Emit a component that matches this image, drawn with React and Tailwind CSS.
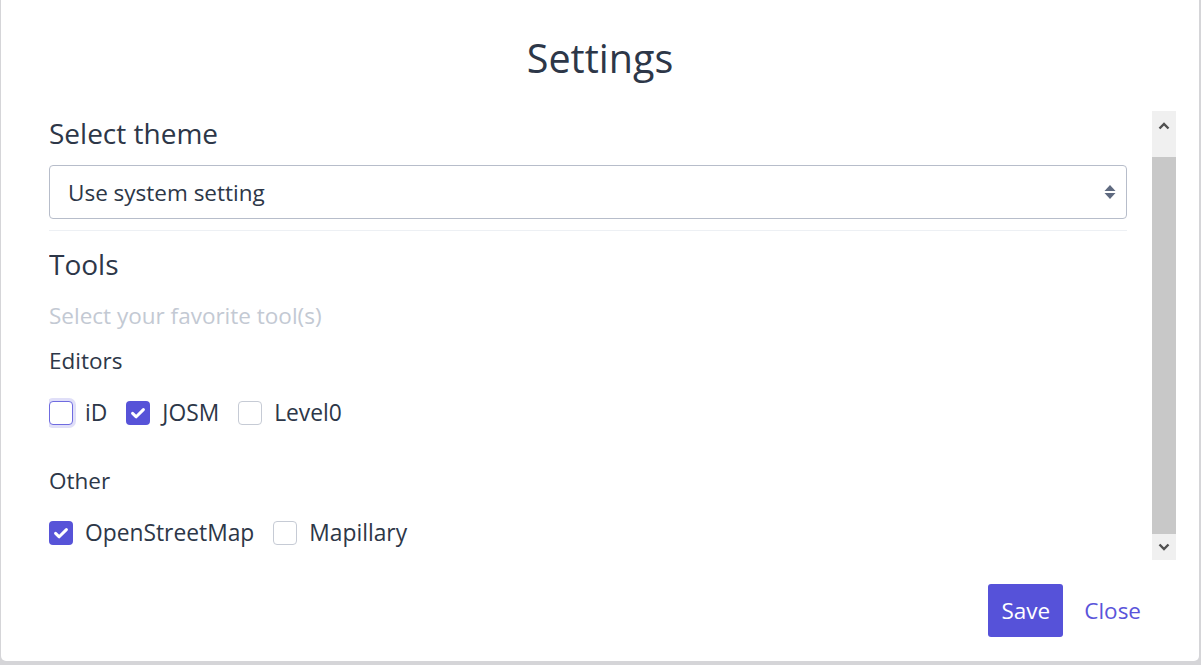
import React from "react";

const font = { fontFamily: '"Open Sans", "Noto Sans", sans-serif' };

function Box({ checked, focus }) {
  if (checked) {
    return (
      <span className="flex h-[24px] w-[24px] shrink-0 items-center justify-center rounded-[4px] bg-[#5753d8]">
        <svg viewBox="0 0 24 24" className="h-[24px] w-[24px]">
          <path d="M6.6 12.4 L10.2 15.8 L17.4 8.6" stroke="white" strokeWidth="3" fill="none" strokeLinecap="round" strokeLinejoin="round" />
        </svg>
      </span>
    );
  }
  return (
    <span
      className={
        focus
          ? "block h-[24px] w-[24px] shrink-0 rounded-[4px] border border-[#6f6be0] bg-white ring-[3px] ring-[#e0dff8]"
          : "block h-[24px] w-[24px] shrink-0 rounded-[4px] border border-[#c6cbd5] bg-white"
      }
    />
  );
}

function Item({ label, checked, focus }) {
  return (
    <div className="flex items-center">
      <Box checked={checked} focus={focus} />
      <span className="ml-[12px] text-[22.8px] leading-[32px] text-[#2d3748]">{label}</span>
    </div>
  );
}

function Chevron({ up }) {
  return (
    <svg viewBox="0 0 12 8" className="h-[8px] w-[12px]">
      <path
        d={up ? "M1.5 6.5 L6 2 L10.5 6.5" : "M1.5 1.5 L6 6 L10.5 1.5"}
        stroke="#505050"
        strokeWidth="2.4"
        fill="none"
      />
    </svg>
  );
}

export default function App() {
  return (
    <div className="flex h-[665px] w-[1201px] items-start bg-[#d5d5d8] pl-[1px]" style={font}>
      <div className="flex h-[661px] w-[1198px] flex-col rounded-b-[5px] bg-white">
        <div className="h-[111px] pt-[38px] text-center text-[39.5px] leading-[40px] text-[#2d3748]">
          Settings
        </div>
        <div className="flex h-[449px] pl-[48px]">
          <div className="w-[1078px] overflow-hidden pt-[4px]">
            <div className="text-[28px] leading-[36px] text-[#2d3748]">Select theme</div>
            <div className="mt-[14px] flex h-[54px] items-center justify-between rounded-[4px] border border-[#b7bdca] pl-[18px] pr-[10px]">
              <span className="pt-[2px] text-[22.5px] text-[#2d3748]">Use system setting</span>
              <svg viewBox="0 0 12 16" className="h-[16px] w-[12px]">
                <path d="M6 1 L11.5 7 L0.5 7 Z" fill="#5f6a80" />
                <path d="M0.5 9 L11.5 9 L6 15 Z" fill="#5f6a80" />
              </svg>
            </div>
            <div className="mt-[11px] h-[1px] bg-[#edf0f4]" />
            <div className="mt-[15px] text-[28px] leading-[36px] text-[#2d3748]">Tools</div>
            <div className="mt-[18px] text-[22.5px] leading-[32px] text-[#c3c9d3]">Select your favorite tool(s)</div>
            <div className="mt-[13px] text-[22.5px] leading-[32px] text-[#2d3748]">Editors</div>
            <div className="mt-[20px] flex items-center gap-[19px]">
              <Item label="iD" focus />
              <Item label="JOSM" checked />
              <Item label="Level0" />
            </div>
            <div className="mt-[36px] text-[22.5px] leading-[32px] text-[#2d3748]">Other</div>
            <div className="mt-[20px] flex items-center gap-[19px]">
              <Item label="OpenStreetMap" checked />
              <Item label="Mapillary" />
            </div>
          </div>
          <div className="ml-[25px] flex w-[24px] flex-col bg-[#f0f0f0]">
            <div className="flex h-[30px] items-center justify-center">
              <Chevron up />
            </div>
            <div className="mt-[16px] h-[377px] bg-[#c8c8c8]" />
            <div className="flex flex-1 items-center justify-center">
              <Chevron />
            </div>
          </div>
        </div>
        <div className="flex items-center justify-end gap-[21px] pr-[58px] pt-[24px]">
          <button className="flex h-[53px] w-[75px] items-center justify-center rounded-[3px] bg-[#5652d9] text-[22.5px] text-white">
            Save
          </button>
          <span className="text-[22.5px] text-[#5a54da]">Close</span>
        </div>
      </div>
    </div>
  );
}
